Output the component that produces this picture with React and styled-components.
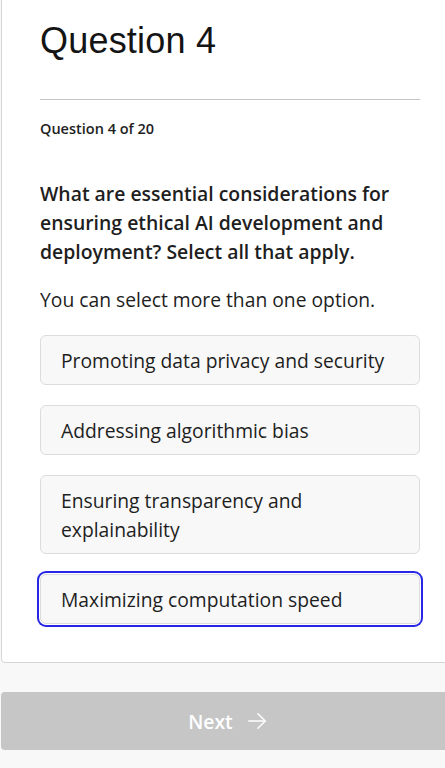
import React from "react";
import styled, { createGlobalStyle } from "styled-components";

const Global = createGlobalStyle`
  html, body {
    margin: 0;
    padding: 0;
    background: #f8f8f8;
    overflow: hidden;
  }
  body {
    font-family: "Open Sans", "Noto Sans", sans-serif;
    color: #1e1e1e;
  }
  * { box-sizing: border-box; }
`;

const Page = styled.div`
  width: 458px;
  margin-left: 1px;
  margin-top: -20px;
  display: flex;
  flex-direction: column;
  gap: 29px;
`;

const Card = styled.section`
  background: #ffffff;
  border: 1px solid #d6d6d6;
  border-radius: 4px;
  padding: 38px 38px 38px 38px;
  display: flex;
  flex-direction: column;
`;

const Title = styled.h1`
  margin: 0;
  font-family: "Liberation Sans", Arial, sans-serif;
  font-weight: 400;
  font-size: 36px;
  line-height: 44px;
  color: #141414;
  letter-spacing: 0.2px;
`;

const Divider = styled.hr`
  margin: 36px 0 0 0;
  border: none;
  border-top: 1px solid #c4c4c4;
  height: 0;
`;

const Counter = styled.div`
  margin-top: 18px;
  font-size: 14.5px;
  line-height: 22px;
  font-weight: 600;
  color: #1e1e1e;
`;

const Prompt = styled.h2`
  margin: 39px 0 0 0;
  font-size: 19.4px;
  line-height: 29px;
  font-weight: 600;
  color: #1e1e1e;
`;

const Hint = styled.p`
  margin: 19px 0 0 0;
  font-size: 19.3px;
  line-height: 29px;
  font-weight: 400;
  color: #1e1e1e;
`;

const Options = styled.div`
  margin-top: 21px;
  display: flex;
  flex-direction: column;
  gap: 20px;
`;

const Option = styled.button`
  display: block;
  width: 100%;
  text-align: left;
  font-family: "Open Sans", "Noto Sans", sans-serif;
  font-size: 19.3px;
  line-height: 29px;
  color: #1e1e1e;
  background: #f8f8f8;
  border: 1px solid #dcdcdc;
  border-radius: 6px;
  padding: 9.5px 20px;
  cursor: pointer;
  outline: none;
  box-shadow: ${(p) =>
    p.$focused ? "0 0 0 1px #ffffff, 0 0 0 3px #2626e4" : "none"};
`;

const NextButton = styled.button`
  height: 58px;
  width: 100%;
  border: none;
  border-radius: 4px;
  background: #c6c6c6;
  color: #ffffff;
  font-family: "Open Sans", "Noto Sans", sans-serif;
  font-size: 19.3px;
  font-weight: 600;
  display: flex;
  align-items: center;
  justify-content: center;
  gap: 13px;
  padding: 0 4px 0 0;
`;

const options = [
  "Promoting data privacy and security",
  "Addressing algorithmic bias",
  "Ensuring transparency and explainability",
  "Maximizing computation speed",
];

export default function App() {
  return (
    <>
      <Global />
      <Page>
        <Card>
          <Title>Question 4</Title>
          <Divider />
          <Counter>Question 4 of 20</Counter>
          <Prompt>
            What are essential considerations for ensuring ethical AI
            development and deployment? Select all that apply.
          </Prompt>
          <Hint>You can select more than one option.</Hint>
          <Options>
            {options.map((o, i) => (
              <Option key={o} $focused={i === 3}>
                {o}
              </Option>
            ))}
          </Options>
        </Card>
        <NextButton>
          Next
          <svg width="22" height="22" viewBox="0 0 24 24" fill="none" stroke="#fff" strokeWidth="1.6" strokeLinecap="round" strokeLinejoin="round">
            <path d="M3 12h18" />
            <path d="M13 4l8 8-8 8" />
          </svg>
        </NextButton>
      </Page>
    </>
  );
}
